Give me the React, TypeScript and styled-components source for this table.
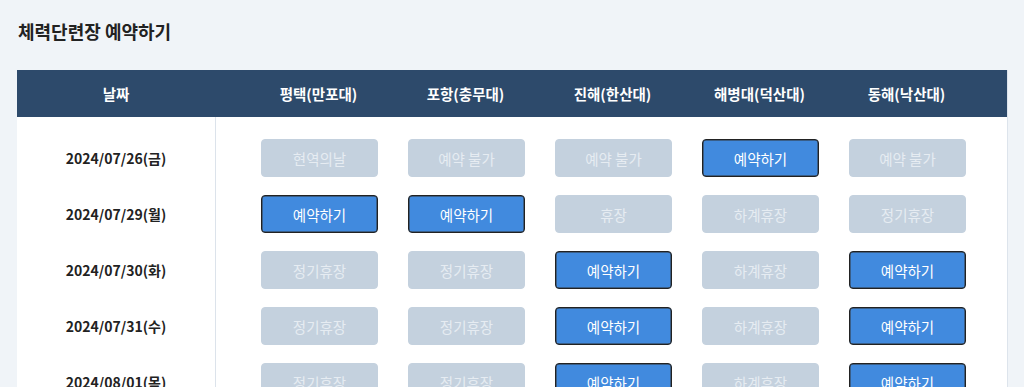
import React from 'react'
import styled, { createGlobalStyle } from 'styled-components'

const GlobalStyle = createGlobalStyle`
  body {
    margin: 0;
    background: #f0f4f8;
    font-family: "Noto Sans CJK KR", "Noto Sans", sans-serif;
    color: #222;
  }
`

type Slot = { label: string; open?: boolean }

const branches = ['평택(만포대)', '포항(충무대)', '진해(한산대)', '해병대(덕산대)', '동해(낙산대)']

const R = { label: '예약하기', open: true }
const rows: { date: string; slots: Slot[] }[] = [
  { date: '2024/07/26(금)', slots: [{ label: '현역의날' }, { label: '예약 불가' }, { label: '예약 불가' }, R, { label: '예약 불가' }] },
  { date: '2024/07/29(월)', slots: [R, R, { label: '휴장' }, { label: '하계휴장' }, { label: '정기휴장' }] },
  { date: '2024/07/30(화)', slots: [{ label: '정기휴장' }, { label: '정기휴장' }, R, { label: '하계휴장' }, R] },
  { date: '2024/07/31(수)', slots: [{ label: '정기휴장' }, { label: '정기휴장' }, R, { label: '하계휴장' }, R] },
  { date: '2024/08/01(목)', slots: [{ label: '정기휴장' }, { label: '정기휴장' }, R, { label: '하계휴장' }, R] },
]

const Page = styled.div`
  padding: 17px 16px 0 17px;
`

const Title = styled.h1`
  margin: 0 0 25px 1px;
  font-size: 18px;
  font-weight: 700;
  line-height: 28px;
  color: #222;
`

const Table = styled.div`
  background: #fff;
  border-right: 1px solid #dde4ec;
`

const HeadRow = styled.div`
  display: flex;
  height: 47px;
  background: #2d4a6b;
  color: #fff;
  font-size: 14.5px;
  font-weight: 700;
`

const DateHead = styled.div`
  width: 198px;
  display: flex;
  align-items: center;
  justify-content: center;
`

const Cols = styled.div`
  flex: 1;
  display: grid;
  grid-template-columns: repeat(5, 147px);
  padding-left: 30px;
  align-items: center;
  justify-items: center;
`

const Body = styled.div`
  display: flex;
  flex-direction: column;
`

const Row = styled.div`
  display: flex;

  & > * {
    min-height: 56px;
  }

  &:first-child > * {
    padding-top: 13px;
  }
`

const DateCell = styled.div`
  width: 198px;
  display: flex;
  align-items: center;
  justify-content: center;
  border-right: 1px solid #dce3eb;
  font-size: 14px;
  font-weight: 700;
  color: #222;
`

const SlotButton = styled.button<{ $open?: boolean }>`
  width: 117px;
  height: 38px;
  border-radius: 4px;
  font-family: inherit;
  font-size: 14.5px;
  cursor: ${p => (p.$open ? 'pointer' : 'default')};
  background: ${p => (p.$open ? '#418ade' : '#c4d1de')};
  color: ${p => (p.$open ? '#fff' : '#e6ecf2')};
  border: ${p => (p.$open ? '1px solid #222' : '1px solid #c4d1de')};
  box-shadow: ${p => (p.$open ? 'inset 0 0 0 0.5px #333' : 'none')};
`

export default function App() {
  return (
    <Page>
      <GlobalStyle />
      <Title>체력단련장 예약하기</Title>
      <Table>
        <HeadRow>
          <DateHead>날짜</DateHead>
          <Cols>
            {branches.map(b => (
              <div key={b}>{b}</div>
            ))}
          </Cols>
        </HeadRow>
        <Body>
          {rows.map(r => (
            <Row key={r.date}>
              <DateCell>{r.date}</DateCell>
              <Cols>
                {r.slots.map((s, i) => (
                  <SlotButton key={i} $open={s.open}>
                    {s.label}
                  </SlotButton>
                ))}
              </Cols>
            </Row>
          ))}
        </Body>
      </Table>
    </Page>
  )
}
